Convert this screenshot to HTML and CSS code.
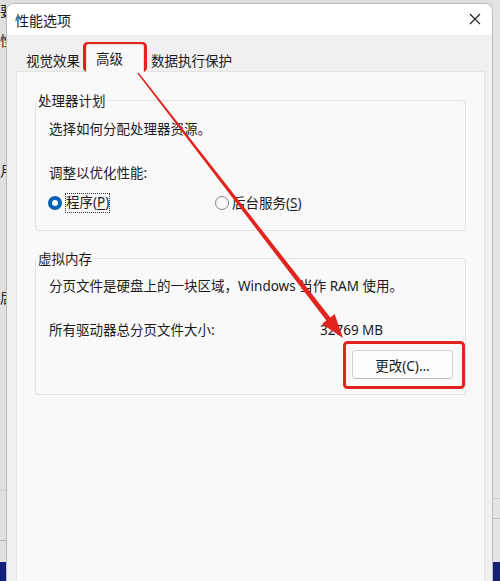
FILE: index.html
```html
<!DOCTYPE html>
<html lang="zh-CN">
<head>
<meta charset="utf-8">
<title>性能选项</title>
<link rel="stylesheet" href="styles.css">
</head>
<body>
<div class="screen">
  <div class="bg-left">
    <span class="bg-char c1">要</span>
    <span class="bg-char c2">性</span>
    <span class="bg-char c3">月</span>
    <span class="bg-char c4">后</span>
    <div class="bg-rule r1"></div>
    <div class="bg-rule r2"></div>
    <div class="taskbar"></div>
  </div>

  <div class="dialog">
    <div class="titlebar">
      <span class="title">性能选项</span>
      <svg class="close" width="12" height="12" viewBox="0 0 12 12" aria-hidden="true">
        <path d="M1 1 L11 11 M11 1 L1 11" stroke="#1a1a1a" stroke-width="1.1" fill="none"/>
      </svg>
    </div>
    <div class="tabs">
      <div class="tab">视觉效果</div>
      <div class="tab active">高级</div>
      <div class="tab next">数据执行保护</div>
    </div>
    <div class="panel">
      <fieldset class="group">
        <legend>处理器计划</legend>
        <div class="group-body first">
          <p class="line">选择如何分配处理器资源。</p>
          <p class="line spaced">调整以优化性能:</p>
          <div class="radios">
            <label class="radio first-radio"><span class="dot checked"></span><span class="focus">程序(<u>P</u>)</span></label>
            <label class="radio"><span class="dot"></span><span class="plain">后台服务(<u>S</u>)</span></label>
          </div>
        </div>
      </fieldset>

      <fieldset class="group second">
        <legend>虚拟内存</legend>
        <div class="group-body last">
          <p class="line">分页文件是硬盘上的一块区域，Windows 当作 RAM 使用。</p>
          <div class="line spaced size-row">
            <span>所有驱动器总分页文件大小:</span>
            <span>32769 MB</span>
          </div>
          <div class="button-row">
            <button class="btn" type="button">更改(C)...</button>
          </div>
        </div>
      </fieldset>
    </div>
  </div>

  <div class="bg-right">
    <div class="bg-rule rr1"></div>
    <div class="bg-rule rr2"></div>
    <div class="taskbar tr"></div>
  </div>

  <svg class="annot" width="500" height="581" viewBox="0 0 500 581" aria-hidden="true">
    <rect x="84.5" y="43.5" width="61" height="27" rx="3" fill="none" stroke="#e3231d" stroke-width="3"/>
    <rect x="344.5" y="342.5" width="119" height="45" rx="3" fill="none" stroke="#e3231d" stroke-width="3"/>
    <polygon fill="#e3231d" points="138.55,72.57 330.29,317.49 334.64,314.12 343,338 321.98,323.92 326.33,320.55 137.45,73.43"/>
  </svg>
</div>
</body>
</html>
```

FILE: styles.css
```css
* { box-sizing: border-box; }

html, body {
  margin: 0;
  padding: 0;
}

body {
  width: 500px;
  height: 581px;
  overflow: hidden;
  background: #dedede;
  font-family: "Noto Sans", "Noto Sans CJK SC", sans-serif;
  font-size: 13.5px;
  color: #1b1b1b;
}

.screen {
  position: relative;
  display: flex;
  width: 500px;
  height: 581px;
  overflow: hidden;
}

/* background window strips */
.bg-left {
  width: 6px;
  flex: 0 0 6px;
  display: flex;
  flex-direction: column;
  overflow: hidden;
  background: #e0e0e0;
}

.bg-char {
  display: block;
  line-height: 18px;
  height: 18px;
  white-space: nowrap;
  color: #222;
  font-family: "Noto Sans CJK SC", sans-serif;
}

.c1 { margin-top: 1px; }
.c2 { margin-top: 12px; }
.c3 { margin-top: 112px; }
.c4 { margin-top: 109px; }

.bg-rule {
  height: 1px;
  flex: 0 0 1px;
  background: #cfcfcf;
}

.r1 { margin-top: 184px; }
.r2 { margin-top: 49px; background: #b9b9b9; }

.taskbar {
  margin-top: 21px;
  flex: 1;
  background: #12207a;
}

.bg-right {
  width: 7px;
  flex: 0 0 7px;
  display: flex;
  flex-direction: column;
  background: #e4e4e4;
}

.rr1 { margin-top: 498px; }
.rr2 { margin-top: 19px; background: #c4c4c4; }
.tr { margin-top: 43px; }

/* dialog */
.dialog {
  width: 487px;
  flex: 0 0 487px;
  height: 600px;
  margin-top: 3px;
  display: flex;
  flex-direction: column;
  background: #f0f0f0;
  border: 1px solid #bcbcbc;
  border-bottom: none;
  border-radius: 8px 8px 0 0;
  overflow: hidden;
}

.titlebar {
  height: 31px;
  flex: 0 0 31px;
  display: flex;
  align-items: center;
  justify-content: space-between;
  padding: 0 11px 0 8px;
  background: #ffffff;
}

.title {
  font-family: "Noto Sans CJK SC", sans-serif;
  font-size: 14px;
  line-height: 20px;
  color: #1a1a1a;
}

.close {
  display: block;
  margin-top: -2px;
}

.tabs {
  height: 36px;
  flex: 0 0 36px;
  display: flex;
  align-items: flex-end;
  padding-left: 13px;
}

.tab {
  height: 22px;
  line-height: 22px;
  padding: 0 6px;
  font-family: "Noto Sans CJK SC", sans-serif;
  white-space: nowrap;
}

.tab.active {
  position: relative;
  z-index: 1;
  height: 28px;
  line-height: 26px;
  margin-bottom: -1px;
  padding: 0 20px 0 9px;
  background: #f9f9f9;
  border: 1px solid #e2e2e2;
  border-bottom: none;
  border-radius: 3px 3px 0 0;
}

.tab.next { padding-left: 7px; }

.panel {
  flex: 1;
  margin: 0 7px 0 9px;
  padding: 19px 18px 0 18px;
  background: #f9f9f9;
  border: 1px solid #e4e4e4;
  border-bottom: none;
}

.group {
  margin: 0;
  padding: 0;
  min-width: 0;
  border: 1px solid #e2e2e2;
  border-radius: 3px;
}

.group.second { margin-top: 18px; }

.group legend {
  padding: 0 2px;
  line-height: 18px;
  font-family: "Noto Sans CJK SC", sans-serif;
}

.group-body {
  padding: 11px 12px 17px 13px;
}

.group-body.last {
  padding: 10px 12px 15px 13px;
}

.line {
  margin: 0;
  line-height: 18px;
  height: 18px;
  white-space: nowrap;
}

.spaced { margin-top: 26px; }

.radios {
  display: flex;
  align-items: center;
  height: 20px;
  margin-top: 11px;
  margin-left: -1px;
}

.radio {
  display: flex;
  align-items: center;
  line-height: 18px;
}

.first-radio { flex: 0 0 167px; }

.dot {
  width: 14px;
  height: 14px;
  flex: 0 0 14px;
  border-radius: 50%;
  border: 1px solid #868686;
  background: #f6f6f6;
}

.dot.checked {
  border: 4px solid #0062b4;
  background: #ffffff;
}

.focus {
  margin-left: 3px;
  padding: 0 0 1px 0;
  border: 1px dotted #333;
  line-height: 17px;
}

.plain { margin-left: 3px; }

u { text-decoration-thickness: 1px; text-underline-offset: 2px; }

.size-row {
  display: grid;
  grid-template-columns: 271px auto;
}

.button-row {
  display: flex;
  justify-content: flex-end;
  margin-top: 11px;
}

.btn {
  width: 101px;
  height: 29px;
  padding: 0;
  font: inherit;
  font-size: 13.5px;
  color: #1b1b1b;
  background: #fdfdfd;
  border: 1px solid #d3d3d3;
  border-bottom-color: #bdbdbd;
  border-radius: 4px;
}

.annot {
  position: absolute;
  left: 0;
  top: 0;
  pointer-events: none;
}
```
